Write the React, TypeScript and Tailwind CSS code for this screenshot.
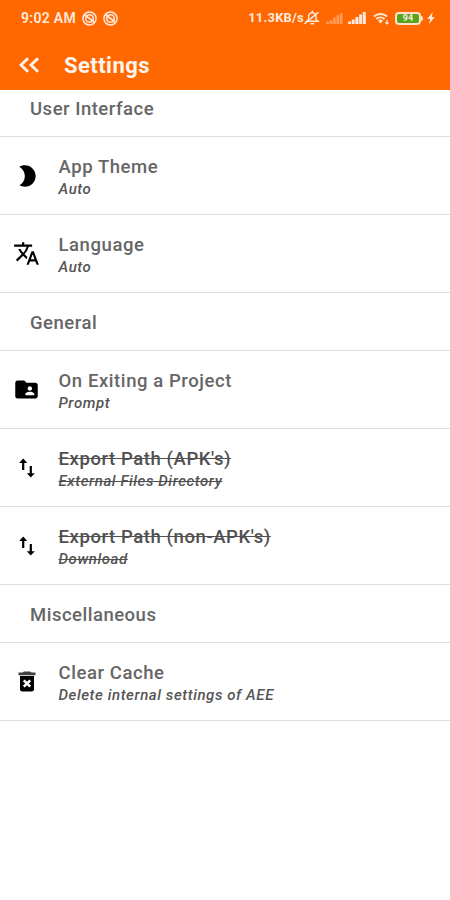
import type { ReactNode } from "react";
import { MdBrightness2, MdFolderShared, MdTranslate } from "react-icons/md";

const DndIcon = () => (
  <svg className="h-[15px] w-[15px]" viewBox="0 0 24 24" fill="none" stroke="currentColor" strokeWidth="2.4">
    <circle cx="12" cy="12" r="10.5" />
    <circle cx="12" cy="12" r="6" />
    <path d="M4 6l16 12" strokeWidth="2.8" />
  </svg>
);

const BellOffIcon = () => (
  <svg className="h-[16px] w-[16px]" viewBox="0 0 24 24" fill="none" stroke="currentColor" strokeWidth="2.2" strokeLinecap="round">
    <path d="M4 17h17l-3-3V9.5a5.5 5.5 0 0 0-11 0V14zM10.5 20.5h4M12.5 2v2" />
    <path d="M1.5 20L21 4" />
  </svg>
);

const SignalIcon = ({ className }: { className: string }) => (
  <svg className={className} viewBox="0 0 18 12" fill="currentColor">
    <path d="M0 9.5h3V12H0zM3.7 7.5h3V12h-3zM7.4 5h3v7h-3zM11.1 2.5h3V12h-3zM14.8 0h3v12h-3z" />
  </svg>
);

const WifiIcon = () => (
  <svg className="h-[13px] w-[17px]" viewBox="0 0 17 13" fill="none" stroke="currentColor" strokeWidth="1.9">
    <path d="M1 4.5a9.5 9.5 0 0 1 13 0M3.4 7a6 6 0 0 1 8.2 0" />
    <path d="M5 8.7a3.8 3.8 0 0 1 5 0L7.5 11.5z" fill="currentColor" stroke="none" />
    <path d="M14 8v4M12.5 10.5L14 12l1.5-1.5" strokeWidth="1.2" />
  </svg>
);

const BoltIcon = () => (
  <svg className="h-[12px] w-[8px]" viewBox="0 0 8 12" fill="currentColor">
    <path d="M5.8 0L0.2 7h3L2 12l5.8-7h-3z" />
  </svg>
);

const BackIcon = () => (
  <svg className="h-[18px] w-[22px]" viewBox="0 0 22 18" fill="none" stroke="currentColor" strokeWidth="2.8">
    <path d="M10 2.2L3 9l7 6.8M20 2.2L13 9l7 6.8" />
  </svg>
);

const SwapIcon = () => (
  <svg className="h-[20px] w-[16px]" viewBox="0 0 16 20" fill="none" stroke="currentColor" strokeWidth="2.2">
    <path d="M4.2 12V2M11.8 8v10" />
    <path d="M0.2 5L4.2 0.5l4 4.5zM7.8 15.2l4 4.3 4-4.3z" fill="currentColor" stroke="none" />
  </svg>
);

const TrashIcon = () => (
  <svg className="h-[21px] w-[18px]" viewBox="0 0 18 21" fill="currentColor">
    <path d="M0.5 1.5h4l1.5-1h6l1.5 1h4V4.2h-17z" opacity="0.75" />
    <path d="M2 5h14v13.2a2.3 2.3 0 0 1-2.3 2.3H4.3A2.3 2.3 0 0 1 2 18.2z" />
    <path d="M5.8 9.3l6.4 6.4M12.2 9.3l-6.4 6.4" stroke="#fff" strokeWidth="2.6" />
  </svg>
);

const StatusBar = () => (
  <div className="flex h-9 items-center justify-between pr-[15px] pl-[21px] text-[#ffe9dc]">
    <div className="flex items-center gap-[6px]">
      <span className="text-[14px] font-semibold tracking-[0.3px]">9:02 AM</span>
      <DndIcon />
      <DndIcon />
    </div>
    <div className="flex items-center">
      <span className="text-[13px] font-bold tracking-[0.2px]">11.3KB/s</span>
      <BellOffIcon />
      <SignalIcon className="ml-[6px] h-[11px] w-[17px] opacity-40" />
      <SignalIcon className="ml-[5px] h-[12px] w-[18px]" />
      <div className="ml-[7px]"><WifiIcon /></div>
      <div className="ml-[5px] flex h-[13px] w-[26px] items-center justify-center rounded-[4px] border-2 border-[#ffe0c8] bg-[#55a51c] text-[9px] leading-none font-bold">94</div>
      <div className="mr-[4px] h-[5px] w-[2px] rounded-r-sm bg-[#ffe0c8]" />
      <BoltIcon />
    </div>
  </div>
);

const Section = ({ title, className }: { title: string; className: string }) => (
  <div className={`${className} flex items-center border-b border-[#dedede] pl-[30px] text-[18.5px] font-medium tracking-[0.5px] text-[#666]`}>
    {title}
  </div>
);

type ItemProps = { icon: ReactNode; title: string; summary: string; disabled?: boolean };

const Item = ({ icon, title, summary, disabled }: ItemProps) => (
  <div className="flex h-[78px] items-center border-b border-[#dedede]">
    <div className="ml-[13px] flex w-[27px] justify-center text-black">{icon}</div>
    <div className={disabled ? "ml-[18.5px] pt-[5px] text-[#505050] line-through" : "ml-[18.5px] pt-[5px] text-[#666]"}>
      <div className="text-[18.5px] leading-[23px] font-medium tracking-[0.58px]">{title}</div>
      <div className="text-[15px] leading-[21px] font-medium tracking-[0.58px] text-[#555] italic">{summary}</div>
    </div>
  </div>
);

export default function App() {
  return (
    <div className="h-[900px] w-[450px] overflow-hidden bg-white font-['Roboto',sans-serif]">
      <header className="h-[90px] bg-[#ff6700]">
        <StatusBar />
        <div className="flex h-[58px] items-center pl-[18px] text-[#fff5ef]">
          <BackIcon />
          <h1 className="ml-[24px] text-[22px] font-bold tracking-[0.45px]">Settings</h1>
        </div>
      </header>
      <Section title="User Interface" className="h-[47px] pb-[6px]" />
      <Item icon={<MdBrightness2 size={26} />} title="App Theme" summary="Auto" />
      <Item icon={<MdTranslate size={27} />} title="Language" summary="Auto" />
      <Section title="General" className="h-[58px] pt-[4px]" />
      <Item icon={<MdFolderShared size={27} />} title="On Exiting a Project" summary="Prompt" />
      <Item icon={<SwapIcon />} title="Export Path (APK's)" summary="External Files Directory" disabled />
      <Item icon={<SwapIcon />} title="Export Path (non-APK's)" summary="Download" disabled />
      <Section title="Miscellaneous" className="h-[58px] pt-[4px]" />
      <Item icon={<TrashIcon />} title="Clear Cache" summary="Delete internal settings of AEE" />
    </div>
  );
}
